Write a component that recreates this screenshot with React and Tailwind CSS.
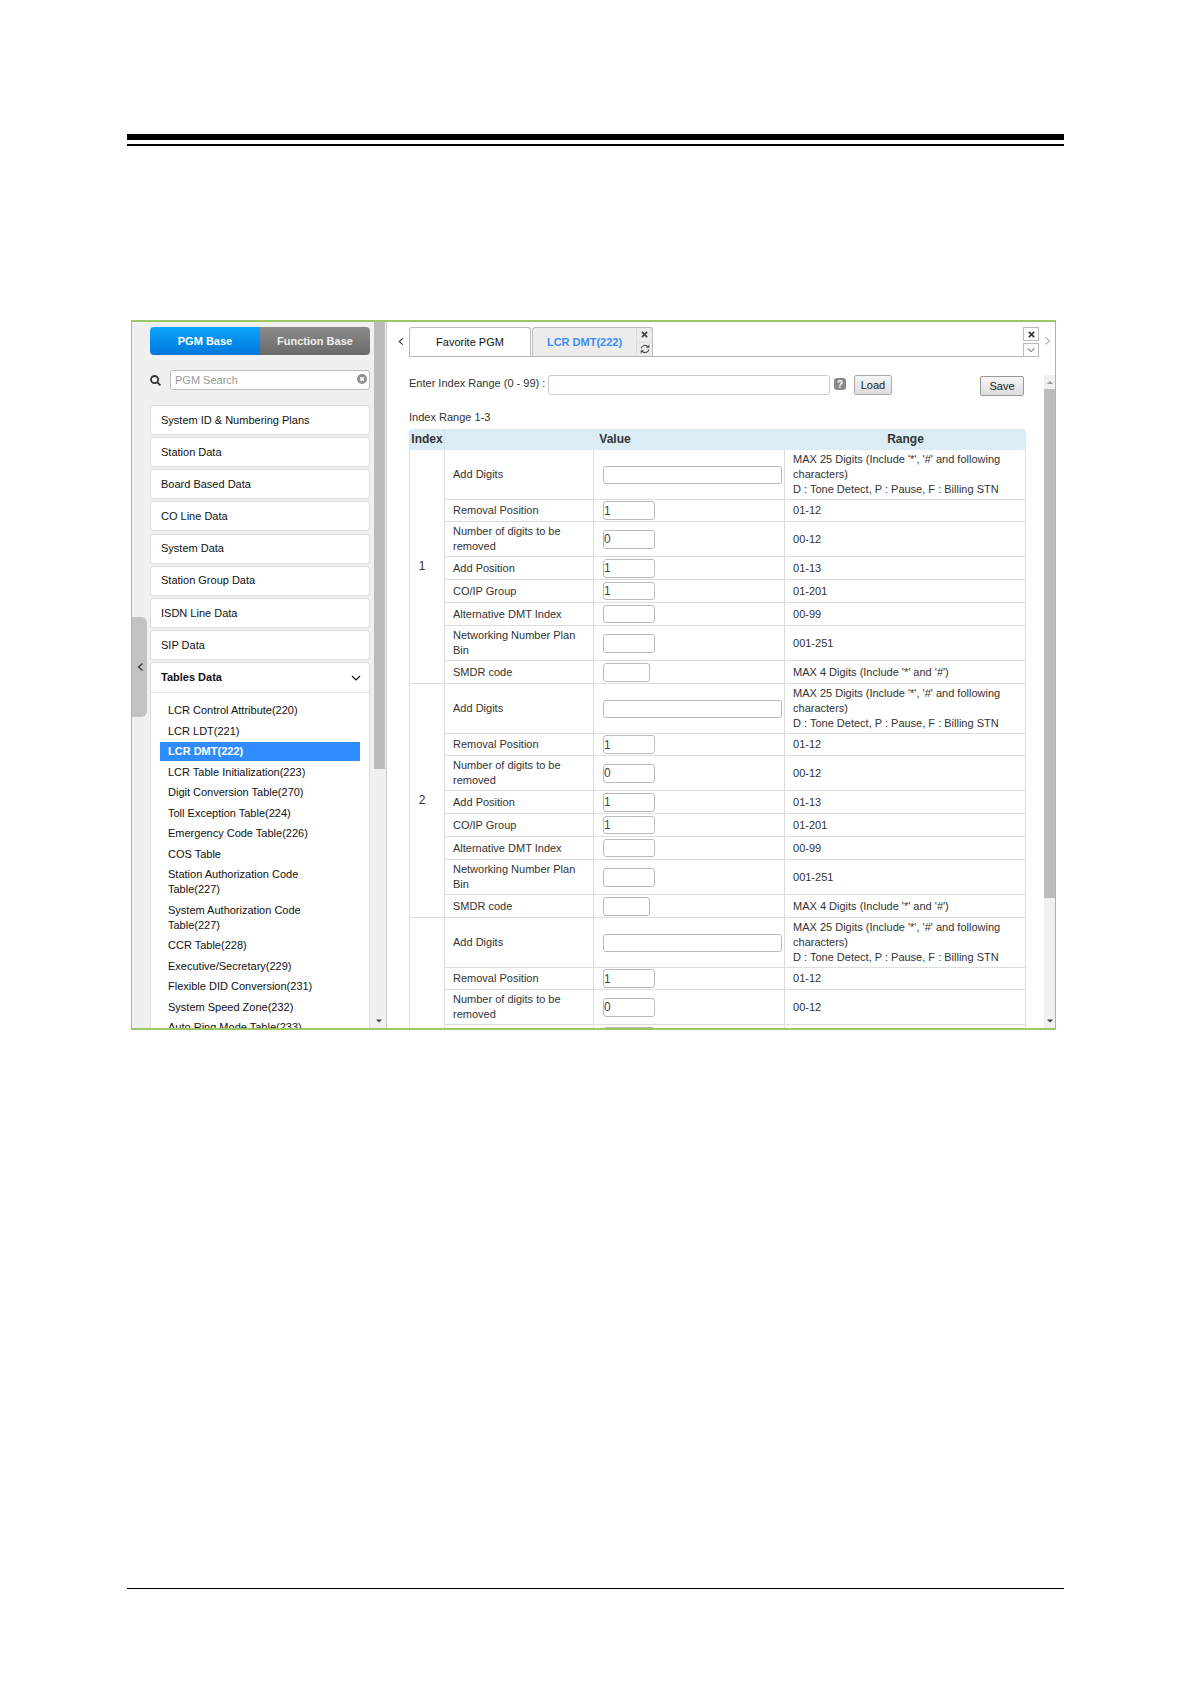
import React from "react";

const categories = [
  "System ID & Numbering Plans",
  "Station Data",
  "Board Based Data",
  "CO Line Data",
  "System Data",
  "Station Group Data",
  "ISDN Line Data",
  "SIP Data",
];

const tables = [
  "LCR Control Attribute(220)",
  "LCR LDT(221)",
  "LCR DMT(222)",
  "LCR Table Initialization(223)",
  "Digit Conversion Table(270)",
  "Toll Exception Table(224)",
  "Emergency Code Table(226)",
  "COS Table",
  "Station Authorization Code Table(227)",
  "System Authorization Code Table(227)",
  "CCR Table(228)",
  "Executive/Secretary(229)",
  "Flexible DID Conversion(231)",
  "System Speed Zone(232)",
  "Auto Ring Mode Table(233)",
];

const fields = [
  { label: "Add Digits", h: "h-[50px]", input: "w-full h-[18px]", value: "", range: "MAX 25 Digits (Include '*', '#' and following characters)\nD : Tone Detect, P : Pause, F : Billing STN" },
  { label: "Removal Position", h: "h-[22px]", input: "w-[52px] h-[19px]", value: "1", range: "01-12" },
  { label: "Number of digits to be removed", h: "h-[35px]", input: "w-[52px] h-[19px]", value: "0", range: "00-12" },
  { label: "Add Position", h: "h-[23px]", input: "w-[52px] h-[19px]", value: "1", range: "01-13" },
  { label: "CO/IP Group", h: "h-[23px]", input: "w-[52px] h-[18px]", value: "1", range: "01-201" },
  { label: "Alternative DMT Index", h: "h-[23px]", input: "w-[52px] h-[18px]", value: "", range: "00-99" },
  { label: "Networking Number Plan Bin", h: "h-[35px]", input: "w-[52px] h-[19px]", value: "", range: "001-251" },
  { label: "SMDR code", h: "h-[23px]", input: "w-[47px] h-[19px]", value: "", range: "MAX 4 Digits (Include '*' and '#')" },
];

function Chevron({ dir, className }) {
  const d = {
    left: "M6.5 1.5 2.5 5l4 3.5",
    right: "M3.5 1.5 7.5 5l-4 3.5",
    down: "M1 3l4 4 4-4",
  }[dir];
  return (
    <svg viewBox="0 0 10 10" className={className} fill="none" stroke="currentColor" strokeWidth="1.2" aria-hidden="true">
      <path d={d} />
    </svg>
  );
}

function Cross({ className }) {
  return (
    <svg viewBox="0 0 8 8" className={className} stroke="currentColor" strokeWidth="1.9" aria-hidden="true">
      <path d="M1 1l6 6M7 1L1 7" />
    </svg>
  );
}

function Refresh({ className }) {
  return (
    <svg viewBox="0 0 10 10" className={className} fill="none" stroke="currentColor" strokeWidth="1.2" aria-hidden="true">
      <path d="M1.2 4.4A3.8 3.8 0 0 1 8 3M8.8 5.6A3.8 3.8 0 0 1 2 7" />
      <path d="M9.3 0.6v3.2H6.1zM0.7 9.4V6.2h3.2z" fill="currentColor" stroke="none" />
    </svg>
  );
}

function Arrow({ up, className }) {
  return (
    <svg viewBox="0 0 6 4" className={className} fill="currentColor" aria-hidden="true">
      <path d={up ? "M0 4l3-3 3 3z" : "M0 0.5h6l-3 3z"} />
    </svg>
  );
}

function Sidebar() {
  return (
    <aside className="flex w-[255px] shrink-0 bg-[#f0f0f0]">
      <div className="w-[18px] shrink-0 pt-[295px]">
        <button aria-label="Collapse menu" className="flex h-[100px] w-[15px] items-center justify-center rounded-r-md bg-[#c3c3c3] pl-[2px] text-[#333]">
          <Chevron dir="left" className="size-[10px]" />
        </button>
      </div>
      <div className="flex min-h-0 min-w-0 flex-1 flex-col overflow-y-auto pt-[5px] pr-1 [scrollbar-width:none]">
        <div className="flex h-7 shrink-0 overflow-hidden rounded text-[11px] font-bold text-white">
          <button className="flex-1 bg-linear-to-b from-[#0fa5fa] to-[#0277dc]">PGM Base</button>
          <button className="flex-1 bg-linear-to-b from-[#8c8c8c] to-[#6a6a6a] text-[#eee]">Function Base</button>
        </div>
        <div className="mt-[15px] flex items-center">
          <svg viewBox="0 0 11 11" className="mr-[9px] size-[11px] shrink-0" fill="none" stroke="#333" strokeWidth="1.8" aria-hidden="true">
            <circle cx="4.6" cy="4.6" r="3.6" />
            <path d="M7.2 7.2l3.2 3.2" />
          </svg>
          <div className="flex h-5 flex-1 items-center rounded-[3px] border border-[#bbb] bg-white pr-[2px]">
            <input aria-label="PGM Search" placeholder="PGM Search" className="min-w-0 flex-1 bg-transparent px-1 text-[11px] outline-none placeholder:text-[#999]" />
            <button aria-label="Clear search" className="mb-[3px]">
              <svg viewBox="0 0 10 10" className="size-[10px]" aria-hidden="true">
                <circle cx="5" cy="5" r="5" fill="#909090" />
                <path d="M3.3 3.3l3.4 3.4M6.7 3.3L3.3 6.7" stroke="#fff" strokeWidth="1.7" />
              </svg>
            </button>
          </div>
        </div>
        <div className="mt-[15px] flex h-[255px] shrink-0 flex-col justify-between">
          {categories.map((c) => (
            <button key={c} className="h-[30px] rounded-[3px] border border-[#dcdcdc] bg-white px-[10px] text-left text-[11px] text-[#111]">
              {c}
            </button>
          ))}
        </div>
        <div className="mt-[2px] shrink-0 rounded-[3px] border border-[#dcdcdc] bg-white">
          <button className="flex h-[30px] w-full items-center justify-between border-b border-[#e4e4e4] pr-2 pl-[10px] text-[11px] font-bold text-[#111]">
            Tables Data
            <Chevron dir="down" className="size-[10px]" />
          </button>
          <ul className="mx-[9px] mt-[8px] flex h-[336px] flex-col justify-between text-[11px] leading-[15px] text-[#111]">
            {tables.map((t) => (
              <li key={t}>
                <a href="#" className={t === "LCR DMT(222)" ? "block bg-[#2e8cff] py-[2px] pr-9 pl-2 font-bold text-white" : "block py-[2px] pr-9 pl-2"}>
                  {t}
                </a>
              </li>
            ))}
          </ul>
        </div>
      </div>
      <div className="flex w-[13px] shrink-0 flex-col items-start border-r border-[#ccc] text-[#444]">
        <div className="h-[447px] w-[11px] bg-[#bbb]" />
        <Arrow className="mt-auto mb-[5px] ml-[2px] h-1 w-[6px]" />
      </div>
    </aside>
  );
}

function Tabs() {
  return (
    <div className="flex items-start pt-[5px]">
      <button aria-label="Previous tab" className="flex h-7 w-[22px] shrink-0 items-center justify-center pl-[7px] text-[#333]">
        <Chevron dir="left" className="size-[9px]" />
      </button>
      <div role="tablist" className="flex h-[30px] flex-1 border-b border-[#b5b5b5]">
        <button role="tab" className="w-[122px] rounded-t-[3px] border border-b-0 border-[#bbb] bg-white text-[11px] text-[#111]">
          Favorite PGM
        </button>
        <div className="ml-[1px] flex w-[121px] rounded-t-[3px] border border-b-0 border-[#bbb] bg-[#ececec]">
          <button role="tab" aria-selected="true" className="flex-1 text-[11px] font-bold text-[#3b8ef5]">
            LCR DMT(222)
          </button>
          <div className="flex w-4 flex-col border-l border-[#ddd] text-[#444]">
            <button aria-label="Close tab" className="flex flex-1 items-center justify-center border-b border-[#ddd]">
              <Cross className="size-[7px]" />
            </button>
            <button aria-label="Reload tab" className="flex flex-1 items-center justify-center">
              <Refresh className="size-[10px]" />
            </button>
          </div>
        </div>
      </div>
      <div className="flex h-[30px] w-4 shrink-0 flex-col justify-between text-[#333]">
        <button aria-label="Close all tabs" className="flex h-[14px] items-center justify-center border border-[#bbb]">
          <Cross className="size-[7px]" />
        </button>
        <button aria-label="Tab list" className="flex h-[14px] items-center justify-center border border-[#bbb]">
          <Chevron dir="down" className="size-[8px]" />
        </button>
      </div>
      <button aria-label="Next tab" className="flex h-7 w-4 shrink-0 items-center justify-center text-[#bbb]">
        <Chevron dir="right" className="size-[10px]" />
      </button>
    </div>
  );
}

function IndexTable() {
  return (
    <table className="mt-[4px] w-full table-fixed border-separate border-spacing-0 rounded-t border-l border-[#ddd] text-[11px] leading-[15px]">
      <colgroup>
        <col className="w-[35px]" />
        <col className="w-[149px]" />
        <col className="w-[191px]" />
        <col />
      </colgroup>
      <thead>
        <tr className="h-[21px] text-[12px] text-[#333]">
          <th className="rounded-tl border-r border-[#cfe0e8] bg-[#dbecf5] p-0">Index</th>
          <th colSpan={2} className="bg-[#dbecf5] p-0">Value</th>
          <th className="rounded-tr bg-[#dbecf5] p-0">Range</th>
        </tr>
      </thead>
      {[1, 2, 3].map((n) => (
        <tbody key={n}>
          {fields.map((f, i) => (
            <tr key={f.label}>
              {i === 0 && (
                <td rowSpan={fields.length} className="border-r border-b border-[#ddd] p-0 pr-[10px] text-center text-[12px]">
                  {n}
                </td>
              )}
              <td className={`${f.h} border-r border-b border-[#ddd] py-0 pr-4 pl-2`}>
                <label htmlFor={`f-${n}-${i}`}>{f.label}</label>
              </td>
              <td className="border-r border-b border-[#ddd] py-0 pr-[2px] pl-[9px]">
                <input id={`f-${n}-${i}`} defaultValue={f.value} className={`${f.input} block rounded-[3px] border border-[#bbb] bg-white px-0 text-[12px] text-[#444] outline-none`} />
              </td>
              <td className="border-r border-b border-[#ddd] py-0 pr-2 pl-2 whitespace-pre-line">{f.range}</td>
            </tr>
          ))}
        </tbody>
      ))}
    </table>
  );
}

export default function App() {
  return (
    <main className="min-h-[1684px] bg-white px-[127px] pt-[134px] font-['Liberation_Sans',Arial,sans-serif] text-[#333]">
      <div className="h-[12px] border-t-[6px] border-b-2 border-black" />
      <div className="mt-[174px] mr-2 ml-1 flex h-[710px] overflow-hidden border-x border-y-2 border-[#9bc765]">
        <Sidebar />
        <section className="flex min-w-0 flex-1 flex-col">
          <Tabs />
          <div className="flex min-h-0 flex-1 pt-[18px]">
            <div className="min-w-0 flex-1 overflow-y-auto pr-[18px] pl-[22px] [scrollbar-width:none]">
              <div className="flex items-start text-[11px]">
                <label htmlFor="range" className="w-[139px] shrink-0 leading-[16px] whitespace-nowrap">
                  Enter Index Range (0 - 99) :
                </label>
                <input id="range" className="h-5 w-[282px] min-w-0 rounded-[3px] border border-[#ccc] px-1 outline-none" />
                <button aria-label="Help" className="mt-[3px] ml-1 flex size-3 shrink-0 items-center justify-center rounded-[3px] bg-[#888] text-[10px] font-bold text-white">
                  ?
                </button>
                <button className="ml-2 h-5 w-[38px] shrink-0 rounded-[2px] border border-[#aaa] bg-linear-to-b from-[#f6f6f6] to-[#dcdcdc] text-[#222]">
                  Load
                </button>
                <button className="mt-[1px] mr-[2px] ml-auto h-5 w-11 shrink-0 rounded-[2px] border border-[#999] bg-linear-to-b from-[#f6f6f6] to-[#dcdcdc] text-[#222]">
                  Save
                </button>
              </div>
              <p className="mt-[13px] text-[11px] leading-[16px]">Index Range 1-3</p>
              <IndexTable />
            </div>
            <div className="flex w-[11px] shrink-0 flex-col items-center bg-[#f0f0f0]">
              <Arrow up className="my-[5px] h-1 w-[6px] shrink-0 text-[#999]" />
              <div className="h-[509px] w-full bg-[#bbb]" />
              <Arrow className="mt-auto mb-[5px] h-1 w-[6px] text-[#444]" />
            </div>
          </div>
        </section>
      </div>
      <div className="mt-[558px] border-t border-black" />
    </main>
  );
}
